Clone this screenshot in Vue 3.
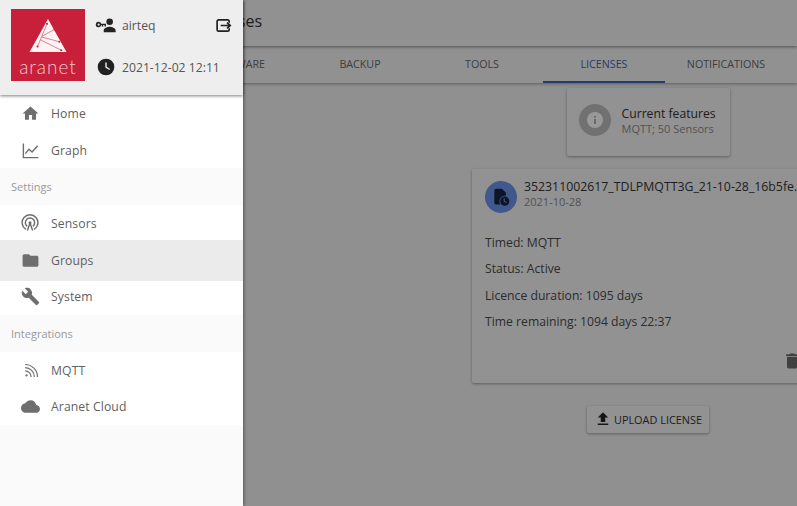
<script setup>
const tabs = ['FIRMWARE', 'BACKUP', 'TOOLS', 'LICENSES', 'NOTIFICATIONS']
const details = ['Timed: MQTT', 'Status: Active', 'Licence duration: 1095 days', 'Time remaining: 1094 days 22:37']
const menu = [
  { type: 'item', label: 'Home', icon: 'home' },
  { type: 'item', label: 'Graph', icon: 'graph' },
  { type: 'head', label: 'Settings' },
  { type: 'item', label: 'Sensors', icon: 'sensors' },
  { type: 'item', label: 'Groups', icon: 'folder', active: true },
  { type: 'item', label: 'System', icon: 'wrench' },
  { type: 'head', label: 'Integrations' },
  { type: 'item', label: 'MQTT', icon: 'rss' },
  { type: 'item', label: 'Aranet Cloud', icon: 'cloud' }
]
</script>

<template>
  <div class="app">
    <div class="page">
      <header class="toolbar"><span class="title">Licenses</span></header>
      <nav class="tabs">
        <div v-for="t in tabs" :key="t" class="tab" :class="{ current: t === 'LICENSES' }">{{ t }}</div>
      </nav>
      <main class="content">
        <section class="features card">
          <div class="round grey">
            <svg width="24" height="24" viewBox="0 0 24 24"><circle cx="12" cy="12" r="8" fill="#fff"/><rect x="11.2" y="11" width="1.6" height="5" fill="#999"/><rect x="11.2" y="8" width="1.6" height="1.6" fill="#999"/></svg>
          </div>
          <div class="feature-text">
            <div class="primary">Current features</div>
            <div class="secondary">MQTT; 50 Sensors</div>
          </div>
        </section>
        <section class="license card">
          <div class="license-head">
            <div class="round blue">
              <svg width="20" height="20" viewBox="0 0 24 24" fill="#16233f"><path d="M6 2h7l5 5v3.2A7 7 0 0 0 11.3 21H6a2 2 0 0 1-2-2V4a2 2 0 0 1 2-2z"/><path d="M16.5 11.5a5.5 5.5 0 1 0 0 11 5.5 5.5 0 0 0 0-11zm0 2v3.2l2.4 1.4-.7 1.1-3-1.8v-3.9z"/></svg>
            </div>
            <div class="names">
              <div class="primary filename">352311002617_TDLPMQTT3G_21-10-28_16b5fe.lic</div>
              <div class="secondary">2021-10-28</div>
            </div>
          </div>
          <p v-for="d in details" :key="d" class="detail">{{ d }}</p>
          <svg class="trash" width="20" height="20" viewBox="0 0 24 24" fill="#6d6d6d"><path d="M6 19c0 1.1.9 2 2 2h8c1.1 0 2-.9 2-2V7H6v12zM19 4h-3.5l-1-1h-5l-1 1H5v2h14V4z"/></svg>
        </section>
        <button class="upload card">
          <svg width="18" height="18" viewBox="0 0 24 24" fill="#262626"><path d="M5 20h14v-2H5v2zm0-10h4v6h6v-6h4l-7-7-7 7z"/></svg>
          <span>UPLOAD LICENSE</span>
        </button>
      </main>
    </div>

    <div class="scrim"></div>

    <aside class="drawer">
      <div class="drawer-head">
        <div class="logo">
          <svg width="42" height="36" viewBox="0 0 44 38">
            <path d="M22 1 41.5 36H2.5z" fill="#fdf3f4"/>
            <g stroke="#d4606f" stroke-width=".8" fill="#c9203a">
              <path d="M21 6 11 30M16 19l13-7M15 20l19 5M14 23l22 11" fill="none"/>
              <circle cx="21" cy="6" r="1.1" stroke="none"/><circle cx="29" cy="12" r="1.1" stroke="none"/><circle cx="34" cy="25" r="1.1" stroke="none"/><circle cx="36" cy="34" r="1.1" stroke="none"/><circle cx="11" cy="30" r="1.1" stroke="none"/>
            </g>
          </svg>
          <span class="wordmark">aranet</span>
        </div>
        <div class="meta">
          <div class="meta-row">
            <svg class="meta-icon" width="24" height="24" viewBox="0 0 24 24" fill="#222"><path d="M16 12a3.6 3.6 0 1 0 0-7.2 3.6 3.6 0 0 0 0 7.2zM9.5 20v-2c0-2.7 4.3-4 6.5-4s6.5 1.3 6.5 4v2z"/><path fill-rule="evenodd" d="M4 9a3 3 0 0 1 2.8 2H12v3h-1.6v-1.4H9V14H7.4v-1.4h-.6A3 3 0 1 1 4 9zm0 1.8a1.2 1.2 0 1 0 0 2.4 1.2 1.2 0 0 0 0-2.4z" transform="translate(0 -.5)"/></svg>
            <span class="user">airteq</span>
            <svg class="logout" width="17" height="17" viewBox="0 0 24 24" fill="none" stroke="#222" stroke-width="2.4"><path d="M20 8V6a2 2 0 0 0-2-2H5a2 2 0 0 0-2 2v12a2 2 0 0 0 2 2h13a2 2 0 0 0 2-2v-2"/><path d="M8 12h13M17 8l4.5 4-4.5 4"/></svg>
          </div>
          <div class="meta-row">
            <svg class="meta-icon" width="20" height="20" viewBox="0 0 24 24"><circle cx="12" cy="12" r="10" fill="#222"/><path d="M12 6.5V12l4.5 3" fill="none" stroke="#eee" stroke-width="1.7"/></svg>
            <span>2021-12-02 12:11</span>
          </div>
        </div>
      </div>
      <template v-for="m in menu" :key="m.label">
        <div v-if="m.type === 'head'" class="menu-head">{{ m.label }}</div>
        <div v-else class="menu-item" :class="{ active: m.active }">
          <span class="menu-icon">
            <svg v-if="m.icon === 'home'" width="19" height="19" viewBox="0 0 24 24" fill="#6e6e6e"><path d="M10 20v-6h4v6h5v-8h3L12 3 2 12h3v8z"/></svg>
            <svg v-else-if="m.icon === 'graph'" width="19" height="19" viewBox="0 0 24 24" fill="none" stroke="#6e6e6e" stroke-width="1.8"><path d="M3 3v18h19M5.5 16l4.5-5.5 4 3.5 7-8"/></svg>
            <svg v-else-if="m.icon === 'sensors'" width="18" height="18" viewBox="0 0 24 24" fill="none" stroke="#6e6e6e" stroke-width="1.9"><path d="M6.5 20.5a10.5 10.5 0 1 1 11 0"/><path d="M8.2 16.5a6.2 6.2 0 1 1 7.6 0"/><circle cx="12" cy="11.5" r="2" fill="#6e6e6e" stroke="none"/><path d="M12 12l-3.5 10M12 12l3.5 10"/></svg>
            <svg v-else-if="m.icon === 'folder'" width="19" height="19" viewBox="0 0 24 24" fill="#6e6e6e"><path d="M10 4H4c-1.1 0-2 .9-2 2v12c0 1.1.9 2 2 2h16c1.1 0 2-.9 2-2V8c0-1.1-.9-2-2-2h-8l-2-2z"/></svg>
            <svg v-else-if="m.icon === 'wrench'" width="19" height="19" viewBox="0 0 24 24" fill="#6e6e6e"><path d="M22.7 19l-9.1-9.1c.9-2.3.4-5-1.5-6.9-2-2-5-2.4-7.4-1.3L9 6 6 9 1.6 4.7C.4 7.1.9 10.1 2.9 12.1c1.9 1.9 4.6 2.4 6.9 1.5l9.1 9.1c.4.4 1 .4 1.4 0l2.3-2.3c.5-.4.5-1.1.1-1.4z"/></svg>
            <svg v-else-if="m.icon === 'rss'" class="rss" width="17" height="17" viewBox="0 0 24 24" fill="none" stroke="#6e6e6e" stroke-width="1.7"><circle cx="5" cy="19" r="1.6" fill="#6e6e6e" stroke="none"/><path d="M3 12.5a8.5 8.5 0 0 1 8.5 8.5M3 8a13 13 0 0 1 13 13M3 3.5A17.5 17.5 0 0 1 20.5 21"/></svg>
            <svg v-else width="19" height="19" viewBox="0 0 24 24" fill="#6e6e6e"><path d="M19.35 10.04C18.67 6.59 15.64 4 12 4 9.11 4 6.6 5.64 5.35 8.04 2.34 8.36 0 10.91 0 14c0 3.31 2.69 6 6 6h13c2.76 0 5-2.24 5-5 0-2.64-2.05-4.78-4.65-4.96z"/></svg>
          </span>
          <span>{{ m.label }}</span>
        </div>
      </template>
    </aside>
  </div>
</template>

<style scoped>
.app {
  position: relative;
  width: 797px;
  height: 506px;
  overflow: hidden;
  font-family: "Open Sans", "Liberation Sans", sans-serif;
  font-size: 12.2px;
  color: #4a4a4a;
  background: #f0f0f0;
}
.page { display: flex; flex-direction: column; height: 100%; }
.toolbar {
  height: 46px;
  flex: none;
  display: flex;
  align-items: center;
  padding: 0 0 5px 199px;
  box-sizing: border-box;
  background: #f2f2f2;
  box-shadow: 0 1px 3px rgba(0, 0, 0, .45);
  position: relative;
  z-index: 2;
}
.title { font-size: 16px; color: #333; }
.tabs {
  height: 37px;
  flex: none;
  display: flex;
  padding-left: 177px;
  background: #f2f2f2;
  box-shadow: 0 1px 3px rgba(0, 0, 0, .35);
  position: relative;
  z-index: 1;
}
.tab {
  width: 122px;
  flex: none;
  display: flex;
  align-items: center;
  justify-content: center;
  font-size: 10.7px;
  color: #666;
  box-sizing: border-box;
  padding-bottom: 2px;
}
.tab.current { color: #3f63b5; border-bottom: 2px solid #3f63b5; padding-bottom: 0; }
.content {
  flex: 1;
  display: flex;
  flex-direction: column;
  align-items: center;
  padding: 5px 0 0 499px;
  min-height: 0;
}
.card {
  background: #f4f4f4;
  box-shadow: 0 1px 3px rgba(0, 0, 0, .35);
  border-radius: 2px;
}
.features {
  width: 163px;
  height: 68px;
  flex: none;
  box-sizing: border-box;
  display: flex;
  padding: 16px 12px;
  gap: 11px;
}
.feature-text { padding-top: 2px; }
.round {
  width: 32px;
  height: 32px;
  flex: none;
  border-radius: 50%;
  display: flex;
  align-items: center;
  justify-content: center;
}
.grey { background: #bcbcbc; }
.blue { background: #6c93ea; }
.primary { font-size: 12.2px; line-height: 15px; color: #333; white-space: nowrap; }
.filename { font-size: 12.3px; }
.secondary { font-size: 11px; line-height: 15px; color: #8a8a8a; white-space: nowrap; }
.license {
  width: 352px;
  height: 214px;
  flex: none;
  margin-top: 13px;
  box-sizing: border-box;
  padding: 12px 13px;
  position: relative;
}
.license-head { display: flex; gap: 7px; margin-bottom: 22px; }
.names { margin-top: -2px; }
.detail { margin: 0 0 10px; line-height: 16.4px; color: #4a4a4a; }
.trash { position: absolute; right: 22px; top: 182px; }
.upload {
  margin-top: 23px;
  width: 122px;
  height: 27px;
  flex: none;
  border: 0;
  padding: 0 0 1px;
  display: flex;
  align-items: center;
  justify-content: center;
  gap: 2px;
  font: 10.9px "Open Sans", "Liberation Sans", sans-serif;
  color: #333;
}
.scrim { position: absolute; inset: 0; background: rgba(0, 0, 0, .4); z-index: 5; }
.drawer {
  position: absolute;
  left: 0;
  top: 0;
  bottom: 0;
  width: 243px;
  background: #fafafa;
  box-shadow: 1px 0 3px rgba(0, 0, 0, .4);
  z-index: 6;
  color: #5f5f5f;
}
.drawer-head {
  height: 95px;
  box-sizing: border-box;
  background: #eee;
  display: flex;
  padding: 9px 0 0 11px;
  box-shadow: 0 1px 3px rgba(0, 0, 0, .5);
  position: relative;
  z-index: 2;
}
.logo {
  width: 74px;
  height: 72px;
  background: #c8203a;
  display: flex;
  flex-direction: column;
  align-items: center;
  padding-top: 9px;
  box-sizing: border-box;
}
.wordmark { font: 300 19px/22px Lato, sans-serif; color: #f0c8cd; letter-spacing: 1px; margin-top: 2px; }
.meta { flex: 1; padding: 6px 0 0 10px; }
.meta-row { display: flex; align-items: center; height: 20px; margin-bottom: 22px; color: #555; }
.meta-icon { width: 22px; flex: none; margin-right: 5px; }
.user { flex: 1; }
.logout { margin-right: 11px; }
.menu-item {
  height: 36.7px;
  background: #fff;
  display: flex;
  align-items: center;
  padding-left: 20px;
  letter-spacing: .1px;
}
.menu-item.active {
  height: 41.7px;
  margin: -2px 0 -3px;
  background: #ebebeb;
  position: relative;
  z-index: 1;
}
.menu-icon { width: 31px; display: flex; padding-left: .5px; margin-right: -.5px; }
.rss { margin: 1px 0 0 2px; }
.menu-head {
  height: 36.7px;
  display: flex;
  align-items: center;
  padding-left: 11px;
  font-size: 11px;
  color: #999;
}
</style>

<style>
html, body { margin: 0; overflow: hidden; }
</style>
